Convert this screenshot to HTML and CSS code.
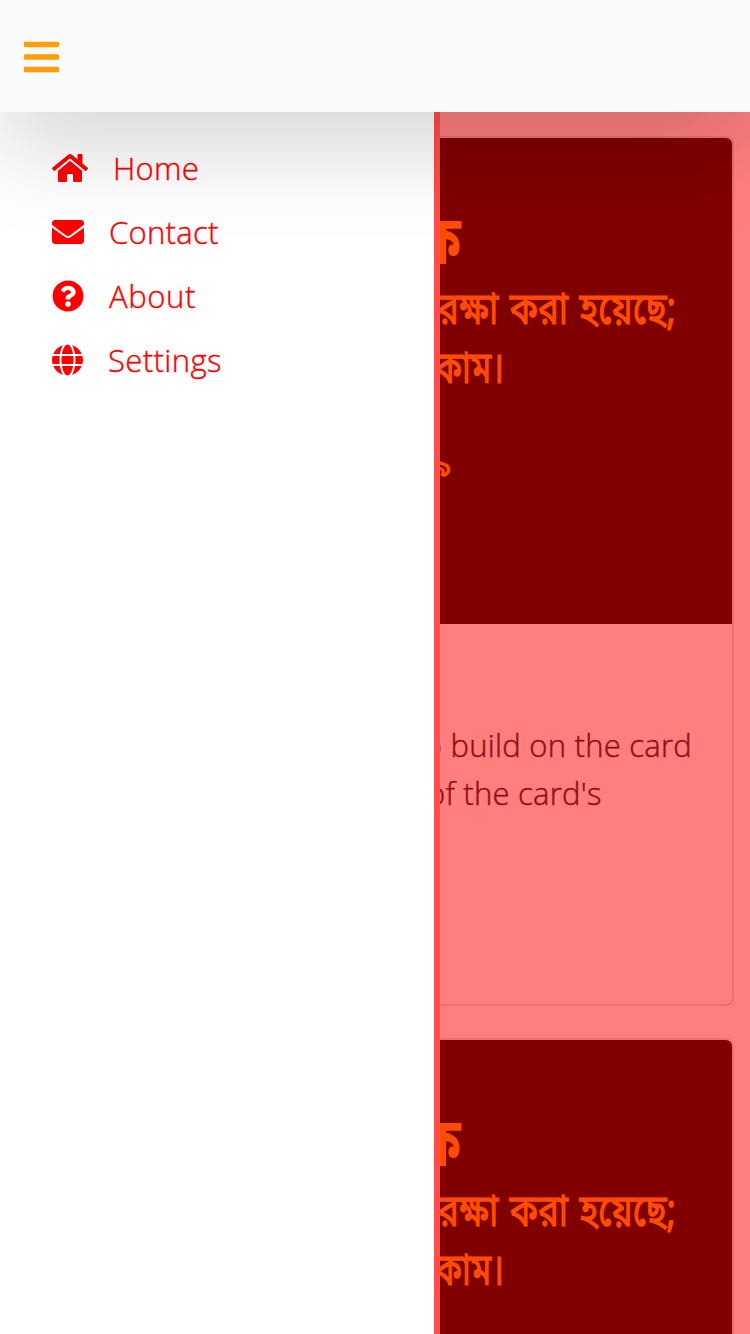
FILE: index.html
```html
<!DOCTYPE html>
<html lang="en">
<head>
<meta charset="utf-8">
<title>Home</title>
<link rel="stylesheet" href="styles.css">
</head>
<body>
<div class="app">
  <header class="navbar">
    <svg class="burger" viewBox="0 0 448 512"><path d="M16 132h416c8.8 0 16-7.200 16-16V76c0-8.800-7.200-16-16-16H16C7.200 60 0 67.200 0 76v40c0 8.800 7.200 16 16 16zm0 160h416c8.800 0 16-7.200 16-16v-40c0-8.800-7.200-16-16-16H16c-8.800 0-16 7.200-16 16v40c0 8.800 7.200 16 16 16zm0 160h416c8.800 0 16-7.200 16-16v-40c0-8.800-7.200-16-16-16H16c-8.800 0-16 7.200-16 16v40c0 8.800 7.200 16 16 16z"/></svg>
  </header>
  <div class="stage">
    <main class="cards">
      <article class="card">
        <svg class="poster" viewBox="0 0 714 486" lang="bn">
          <text class="poster-title" x="402" y="126" textLength="41" lengthAdjust="spacingAndGlyphs">ক</text>
          <text class="poster-line" x="420" y="186" textLength="238" lengthAdjust="spacingAndGlyphs">রক্ষা করা হয়েছে;</text>
          <text class="poster-line" x="417" y="245" textLength="69" lengthAdjust="spacingAndGlyphs">কাম।</text>
          <text class="poster-small" x="433" y="338" text-anchor="end">৯</text>
        </svg>
        <div class="card-body">
          <p>Some quick example text to build on the card<br>title and make up the bulk of the card's<br>content.</p>
        </div>
      </article>
      <article class="card">
        <svg class="poster" viewBox="0 0 714 486" lang="bn">
          <text class="poster-title" x="402" y="126" textLength="41" lengthAdjust="spacingAndGlyphs">ক</text>
          <text class="poster-line" x="420" y="186" textLength="238" lengthAdjust="spacingAndGlyphs">রক্ষা করা হয়েছে;</text>
          <text class="poster-line" x="417" y="245" textLength="69" lengthAdjust="spacingAndGlyphs">কাম।</text>
        </svg>
      </article>
    </main>
    <div class="overlay"></div>
    <nav class="sidebar">
      <a class="item home"><svg viewBox="0 0 576 512"><path d="M280.370 148.260L96 300.110V464a16 16 0 0 0 16 16l112.060-.29a16 16 0 0 0 15.920-16V368a16 16 0 0 1 16-16h64a16 16 0 0 1 16 16v95.640a16 16 0 0 0 16 16.050L464 480a16 16 0 0 0 16-16V300L295.670 148.260a12.190 12.190 0 0 0-15.300 0zM571.600 251.470L488 182.560V44.050a12 12 0 0 0-12-12h-56a12 12 0 0 0-12 12v72.610L318.470 43a48 48 0 0 0-61 0L4.340 251.470a12 12 0 0 0-1.600 16.900l25.500 31A12 12 0 0 0 45.150 301l235.220-193.740a12.190 12.190 0 0 1 15.300 0L530.900 301a12 12 0 0 0 16.900-1.600l25.500-31a12 12 0 0 0-1.700-16.930z"/></svg><span>Home</span></a>
      <a class="item contact"><svg viewBox="0 0 512 512"><path d="M502.300 190.800c3.900-3.100 9.700-.2 9.700 4.700V400c0 26.500-21.500 48-48 48H48c-26.500 0-48-21.500-48-48V195.600c0-5 5.700-7.800 9.700-4.700 22.400 17.400 52.100 39.500 154.100 113.600 21.100 15.400 56.700 47.800 92.200 47.600 35.700.3 72-32.800 92.300-47.600 102-74.100 131.600-96.300 154-113.700zM256 320c23.200.4 56.600-29.200 73.400-41.400 132.700-96.300 142.800-104.700 173.400-128.700 5.800-4.500 9.200-11.500 9.200-18.900v-19c0-26.500-21.500-48-48-48H48c-26.500 0-48 21.500-48 48v19c0 7.400 3.400 14.300 9.200 18.900 30.600 23.900 40.700 32.400 173.400 128.700 16.800 12.200 50.200 41.800 73.400 41.400z"/></svg><span>Contact</span></a>
      <a class="item about"><svg viewBox="0 0 512 512"><path d="M504 256c0 136.997-111.043 248-248 248S8 392.997 8 256C8 119.083 119.043 8 256 8s248 111.083 248 248zM262.655 90c-54.497 0-89.255 22.957-116.549 63.758-3.536 5.286-2.353 12.415 2.715 16.258l34.699 26.310c5.205 3.947 12.621 3.008 16.665-2.122 17.864-22.658 30.113-35.797 57.303-35.797 20.429 0 45.698 13.148 45.698 32.958 0 14.976-12.363 22.667-32.534 33.976C247.128 238.528 216 254.941 216 296v4c0 6.627 5.373 12 12 12h56c6.627 0 12-5.373 12-12v-1.333c0-28.462 83.186-29.647 83.186-106.667 0-58.002-60.165-102-116.531-102zM256 338c-25.365 0-46 20.635-46 46 0 25.364 20.635 46 46 46s46-20.636 46-46c0-25.365-20.635-46-46-46z"/></svg><span>About</span></a>
      <a class="item settings"><svg viewBox="0 0 496 512"><path d="M336.500 160C322 70.700 287.800 8 248 8s-74 62.700-88.500 152h177zM152 256c0 22.200 1.200 43.500 3.300 64h185.300c2.100-20.500 3.300-41.800 3.300-64s-1.200-43.500-3.300-64H155.300c-2.100 20.500-3.300 41.800-3.300 64zm324.700-96c-28.600-67.900-86.500-120.400-158-141.600 24.400 33.800 41.200 84.700 50 141.600h108zM177.200 18.400C105.800 39.600 47.800 92.100 19.300 160h108c8.700-56.900 25.500-107.800 49.900-141.600zM487.400 192H372.700c2.100 21 3.300 42.500 3.300 64s-1.200 43-3.300 64h114.600c5.500-20.500 8.600-41.800 8.600-64s-3.100-43.500-8.500-64zM120 256c0-21.500 1.200-43 3.300-64H8.600C3.200 212.500 0 233.800 0 256s3.200 43.500 8.600 64h114.600c-2-21-3.200-42.500-3.200-64zm39.500 96c14.500 89.300 48.700 152 88.500 152s74-62.700 88.500-152h-177zm159.300 141.600c71.400-21.200 129.400-73.700 158-141.600h-108c-8.800 56.900-25.600 107.800-50 141.600zM19.300 352c28.600 67.900 86.500 120.400 158 141.600-24.400-33.800-41.200-84.700-50-141.600h-108z"/></svg><span>Settings</span></a>
    </nav>
  </div>
</div>
</body>
</html>
```
FILE: styles.css
```css
* { box-sizing: border-box; }
body { margin: 0; font-family: "Open Sans", "Noto Sans", sans-serif; }
.app { display: flex; flex-direction: column; height: 1334px; overflow: hidden; }
.navbar {
  position: relative; z-index: 3; flex: none; height: 112px;
  display: flex; align-items: center; padding: 2px 24px 0;
  background: #f8fafc;
  box-shadow: 0 32px 96px rgba(0, 0, 0, .175);
}
.burger { width: 35px; height: 40px; fill: #ff9d0b; }
.stage { position: relative; flex: 1; min-height: 0; overflow: hidden; }
.cards { display: flex; flex-direction: column; gap: 32px; padding: 24px 16px; }
.card {
  flex: none; height: 870px; border: 2px solid rgba(0, 0, 0, .125);
  border-radius: 8px; background: #fff; background-clip: padding-box; overflow: hidden;
}
.poster { display: block; width: 714px; height: 486px; background: #000; fill: #ff9900; }
.poster text {
  font-family: "Noto Sans Bengali", "Noto Sans", "Open Sans", sans-serif;
  font-weight: 400; stroke: #ff9900; stroke-width: 1.2px;
}
.poster .poster-title { font-size: 68px; font-weight: 700; stroke: none; }
.poster-line { font-size: 45px; word-spacing: 3px; }
.poster .poster-small { font-size: 30px; stroke-width: .8px; }
.card-body { padding: 97px 0 0 32px; }
.card-body p {
  margin: 0; color: #212529; font-size: 31px; font-weight: 300; line-height: 48px;
  letter-spacing: .25px; white-space: nowrap; -webkit-text-stroke: .5px #212529;
}
.overlay { position: absolute; inset: 0; background: rgba(255, 0, 0, .5); }
.sidebar {
  position: absolute; top: 0; bottom: 0; left: 0; width: 440px;
  padding: 24px 52px; background: #fff; border-right: 6px solid #ff4d4d;
}
.item {
  display: flex; align-items: center; height: 64px; color: #f00;
  font-size: 31px; font-weight: 300; letter-spacing: .3px; -webkit-text-stroke: .4px #f00;
}
.item svg { height: 32px; fill: currentColor; }
.item span { display: block; margin-left: 25px; }
.item.about span { letter-spacing: .6px; }
.item.settings span { letter-spacing: .4px; }
```
